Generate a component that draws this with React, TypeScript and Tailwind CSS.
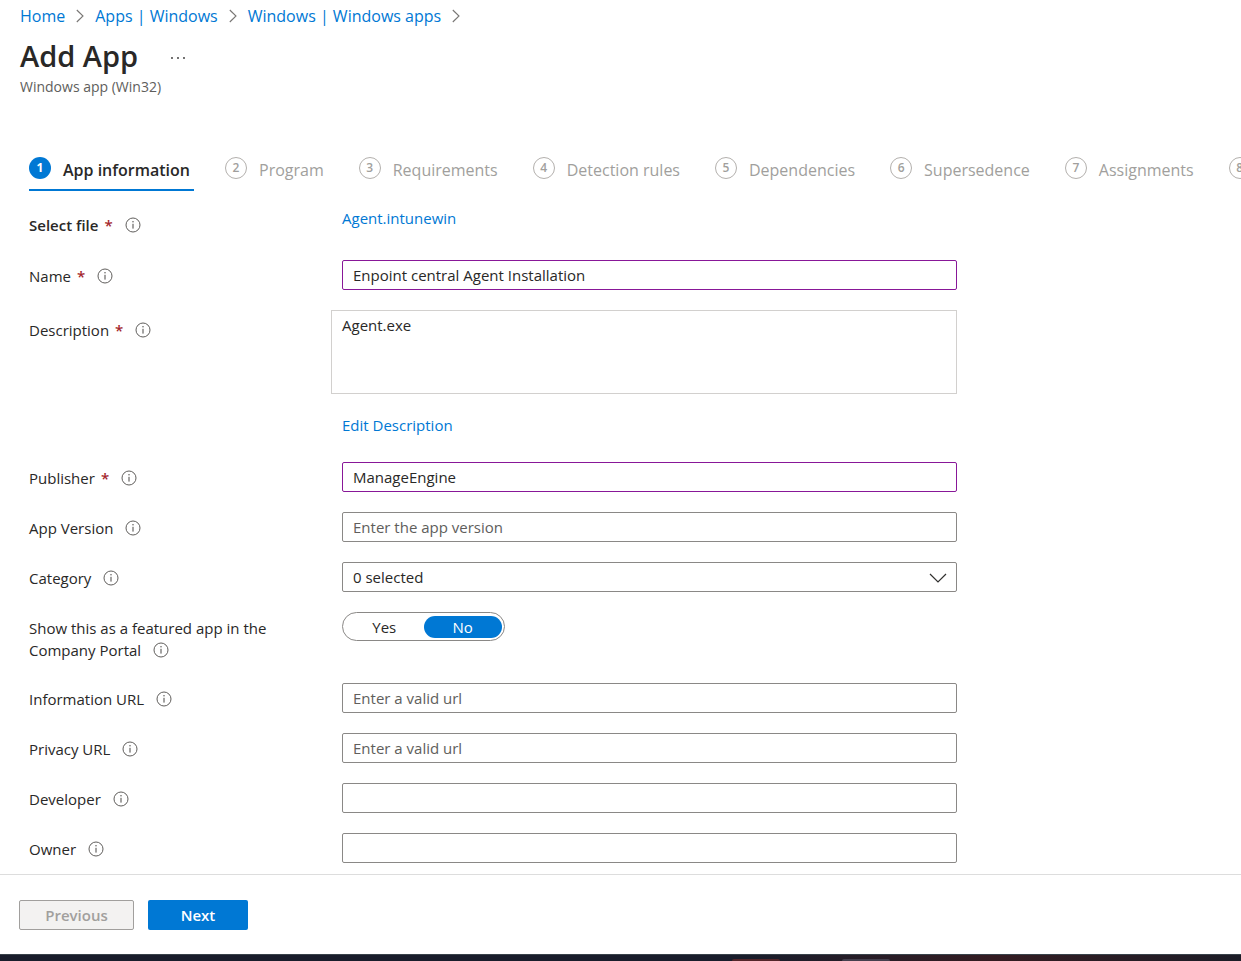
import type { ReactNode } from "react";

type FieldProps = {
  id?: string;
  label: string;
  required?: boolean;
  labelClass?: string;
  children: ReactNode;
};

const steps = [
  "App information",
  "Program",
  "Requirements",
  "Detection rules",
  "Dependencies",
  "Supersedence",
  "Assignments",
  "",
];

const inputClass =
  "block h-[30px] w-full rounded-xs border border-[#8a8886] bg-white px-[10px] text-[15px] text-[#292827] placeholder:text-[#605e5c] outline-none";
const filledClass =
  "block h-[30px] w-full rounded-xs border border-[#881798] bg-white px-[10px] text-[15px] text-[#292827] outline-none";

function InfoIcon() {
  return (
    <svg viewBox="0 0 16 16" className="mt-[3px] ml-3 inline-block size-4 align-top" fill="none" aria-hidden="true">
      <circle cx="8" cy="8" r="7" stroke="#605e5c" strokeWidth="1" />
      <path d="M8 6.8V11.6" stroke="#484644" strokeWidth="1" />
      <circle cx="8" cy="4.8" r="0.7" fill="#484644" />
    </svg>
  );
}

function Chevron() {
  return (
    <svg viewBox="0 0 8 14" className="h-[14px] w-2" fill="none" aria-hidden="true">
      <path d="M0.8 1L7 7L0.8 13" stroke="#797775" strokeWidth="1.1" />
    </svg>
  );
}

function Field({ id, label, required, labelClass = "pt-[5px]", children }: FieldProps) {
  return (
    <div className="grid grid-cols-[313px_1fr] items-start">
      <div className={`min-h-[30px] max-w-[260px] pb-[2px] leading-[22px] ${labelClass}`}>
        <label htmlFor={id}>
          {label}
          {required && <span className="ml-[6px] font-semibold text-[#a4262c]">*</span>}
        </label>
        <InfoIcon />
      </div>
      <div>{children}</div>
    </div>
  );
}

export default function App() {
  return (
    <div className="flex min-h-screen flex-col overflow-x-hidden bg-white font-['Open_Sans','Noto_Sans',sans-serif] text-[15px] text-[#292827]">
      <header className="px-5 pt-1">
        <nav aria-label="Breadcrumb" className="flex items-center gap-[11px] text-[16px] leading-6 text-[#0078d4]">
          <a href="#">Home</a>
          <Chevron />
          <a href="#">Apps | Windows</a>
          <Chevron />
          <a href="#">Windows | Windows apps</a>
          <Chevron />
        </nav>
        <div className="flex items-center gap-8 pt-[7px]">
          <h1 className="text-[29px] leading-[42px] font-semibold">Add App</h1>
          <button type="button" aria-label="More actions" className="pt-1">
            <svg viewBox="0 0 16 4" className="h-1 w-4" fill="#323130">
              <circle cx="2" cy="2" r="0.9" />
              <circle cx="8" cy="2" r="0.9" />
              <circle cx="14" cy="2" r="0.9" />
            </svg>
          </button>
        </div>
        <p className="text-[14px] leading-5 text-[#605e5c]">Windows app (Win32)</p>
      </header>

      <nav aria-label="Steps" className="mt-14 flex gap-[31px] overflow-hidden pl-[29px] text-[16px] whitespace-nowrap">
        {steps.map((step, i) => (
          <a
            key={i}
            href="#"
            className={
              i === 0
                ? "flex h-[38px] shrink-0 items-start gap-3 border-b-2 border-[#0078d4] pr-1 font-semibold"
                : "flex h-[38px] shrink-0 items-start gap-3 pr-1 text-[#a19f9d]"
            }
          >
            <span
              className={
                i === 0
                  ? "mt-1 flex size-[22px] items-center justify-center rounded-full bg-[#0078d4] text-[12px] font-bold text-white"
                  : "mt-1 flex size-[22px] items-center justify-center rounded-full border border-[#b3b0ad] text-[12px] font-semibold"
              }
            >
              {i + 1}
            </span>
            {step && <span className="pt-[5px] leading-6">{step}</span>}
          </a>
        ))}
      </nav>

      <form className="flex w-full max-w-[957px] flex-1 flex-col gap-5 pt-[19px] pb-[10px] pl-[29px]">
        <Field label="Select file" required labelClass="pt-1 font-semibold">
          <a href="#" className="block leading-4 text-[#0078d4]">
            Agent.intunewin
          </a>
        </Field>
        <Field id="name" label="Name" required>
          <input id="name" className={filledClass} defaultValue="Enpoint central Agent Installation" />
        </Field>
        <Field id="description" label="Description" required labelClass="pt-[9px]">
          <textarea
            id="description"
            className="-ml-[11px] block h-[84px] w-[calc(100%+11px)] resize-none border border-[#d2d0ce] px-[10px] py-[3px] leading-[22px] outline-none"
            defaultValue="Agent.exe"
          />
          <a href="#" className="mt-5 mb-[6px] block leading-[22px] text-[#0078d4]">
            Edit Description
          </a>
        </Field>
        <Field id="publisher" label="Publisher" required>
          <input id="publisher" className={filledClass} defaultValue="ManageEngine" />
        </Field>
        <Field id="version" label="App Version">
          <input id="version" className={inputClass} placeholder="Enter the app version" />
        </Field>
        <Field id="category" label="Category">
          <div className="relative">
            <select id="category" className={`${inputClass} appearance-none`}>
              <option>0 selected</option>
            </select>
            <svg
              viewBox="0 0 18 10"
              className="pointer-events-none absolute top-[11px] right-[10px] h-[10px] w-[18px]"
              fill="none"
            >
              <path d="M1 1L9 9L17 1" stroke="#323130" strokeWidth="1.2" />
            </svg>
          </div>
        </Field>
        <Field label="Show this as a featured app in the Company Portal">
          <div
            role="group"
            aria-label="Show this as a featured app in the Company Portal"
            className="flex h-[29px] w-[163px] items-center rounded-full border border-[#8a8886] px-[2px]"
          >
            <button type="button" aria-pressed="false" className="h-[22px] flex-1 rounded-full leading-[22px]">
              Yes
            </button>
            <button
              type="button"
              aria-pressed="true"
              className="h-[22px] flex-1 rounded-full bg-[#0078d4] leading-[22px] text-white"
            >
              No
            </button>
          </div>
        </Field>
        <Field id="info-url" label="Information URL">
          <input id="info-url" className={inputClass} placeholder="Enter a valid url" />
        </Field>
        <Field id="privacy-url" label="Privacy URL">
          <input id="privacy-url" className={inputClass} placeholder="Enter a valid url" />
        </Field>
        <Field id="developer" label="Developer">
          <input id="developer" className={inputClass} />
        </Field>
        <Field id="owner" label="Owner">
          <input id="owner" className={inputClass} />
        </Field>
      </form>

      <footer className="flex gap-[14px] border-t border-[#dddddd] px-[19px] pt-[25px] pb-6 font-semibold">
        <button
          type="button"
          disabled
          className="h-[30px] w-[115px] rounded-xs border border-[#a19f9d] bg-[#f3f2f1] text-[#a19f9d]"
        >
          Previous
        </button>
        <button type="button" className="h-[30px] w-[100px] rounded-xs bg-[#0078d4] text-white">
          Next
        </button>
      </footer>
      <div className="flex h-[7px] items-end border-t border-[#39424a] bg-linear-to-r from-[#191d2b] from-60% via-[#341c22] via-80% to-[#1c1d27]">
        <div className="ml-[59%] h-[2px] w-12 rounded-t-sm bg-[#54262a]" />
        <div className="ml-[5%] h-[2px] w-12 rounded-t-sm bg-[#45404e]" />
      </div>
    </div>
  );
}
